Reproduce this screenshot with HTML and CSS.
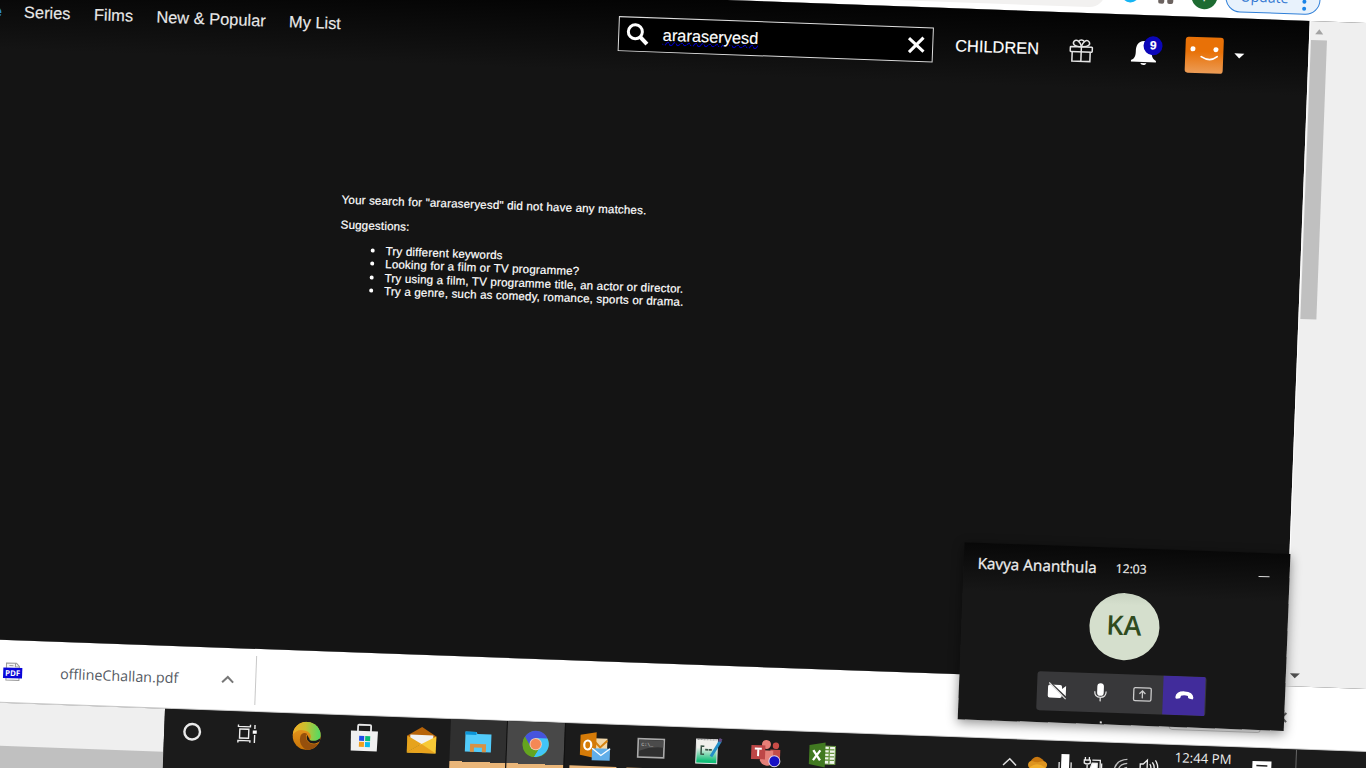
FILE: index.html
```html
<!DOCTYPE html>
<html lang="en">
<head>
<meta charset="utf-8">
<title>Search</title>
<link rel="stylesheet" href="styles.css">
</head>
<body>
<div class="screen">
<div class="stage">
  <div class="toolbar">
    <div class="address"></div>
    <span class="ext-cyan"></span>
    <svg class="ext-grey" width="16" height="14" viewBox="0 0 16 14"><rect x="0" y="2" width="6" height="10" rx="2" fill="#6b625f"/><rect x="9" y="2" width="6" height="10" rx="2" fill="#6b625f"/></svg>
    <span class="profile">Y</span>
    <div class="update"><span>Update</span><svg width="6" height="24" viewBox="0 0 6 24"><g fill="#1a84e8"><circle cx="3" cy="4" r="2"/><circle cx="3" cy="11" r="2"/><circle cx="3" cy="18" r="2"/></g></svg></div>
  </div>
  <div class="main">
    <div class="site">
      <header class="header">
        <span class="nav home">Home</span>
        <span class="nav series">Series</span>
        <span class="nav films">Films</span>
        <span class="nav popular">New &amp; Popular</span>
        <span class="nav mylist">My List</span>
        <div class="search">
          <svg width="23" height="23" viewBox="0 0 23 23" fill="none" stroke="#fff"><circle cx="9" cy="9" r="7" stroke-width="3"/><path d="M14 14L21 21" stroke-width="4"/></svg>
          <span class="query">araraseryesd</span>
          <svg width="18" height="18" viewBox="0 0 18 18" stroke="#fff" stroke-width="3"><path d="M1.500 2.500L16.500 15.500M16 1.500L2 16.500"/></svg>
        </div>
        <span class="nav children">CHILDREN</span>
        <svg class="gift" width="24" height="24" viewBox="0 0 24 24" fill="none" stroke="#e4e4e4" stroke-width="1.5"><rect x="1" y="8" width="22" height="5" rx=".6"/><path d="M3 13v9.500h18V13M12 8v14.500M12 8C4 8 3 5 4.500 2.800C7 -.2 11 3 12 8C13 3 17 -.2 19.500 2.800C21 5 20 8 12 8"/><path d="M9 3C10 .5 14 .5 15 3"/></svg>
        <div class="bell">
          <svg width="25" height="26" viewBox="0 0 25 26" fill="#fff"><path d="M12.500 1C6 1.500 4.500 6 4.500 12C4.500 17 3 19 0 20.500V22H25V20.500C22 19 20.500 17 20.500 12C20.500 6 19 1.500 12.500 1ZM9.500 23H15.500C15 25.500 10 25.500 9.500 23Z"/></svg>
          <span class="count">9</span>
        </div>
        <svg class="face" width="38" height="36" viewBox="0 0 38 36"><defs><linearGradient id="o" x2="0" y2="1"><stop offset=".4" stop-color="#e87107"/><stop offset="1" stop-color="#ec9c56"/></linearGradient></defs><rect width="38" height="36" rx="3" fill="url(#o)"/><circle cx="7.500" cy="12" r="2.500" fill="#fff"/><circle cx="30.500" cy="12" r="2.500" fill="#fff"/><path d="M16 19.500Q25 25 32 19" fill="none" stroke="#fff" stroke-width="1.700" stroke-linecap="round"/></svg>
        <span class="caret"></span>
      </header>
      <section class="results">
        <p class="message">Your search for "araraseryesd" did not have any matches.</p>
        <p class="suggest">Suggestions:</p>
        <ul class="tips">
          <li>Try different keywords</li>
          <li>Looking for a film or TV programme?</li>
          <li>Try using a film, TV programme title, an actor or director.</li>
          <li>Try a genre, such as comedy, romance, sports or drama.</li>
        </ul>
      </section>
    </div>
    <div class="gutter">
      <span class="arrow-up"></span>
      <span class="thumb"></span>
      <span class="arrow-down"></span>
    </div>
  </div>
  <div class="downloads">
    <svg class="pdf" width="19" height="19" viewBox="0 0 19 19"><path d="M3 1H13L16 4V18H3Z" fill="#f5f5f5" stroke="#9a9a9a"/><path d="M12 1V4.500H16M6 3.500H10" fill="none" stroke="#999"/><rect y="5.500" width="19" height="10.500" fill="#0a06d8"/><text x="9.500" y="13.800" text-anchor="middle" textLength="15" lengthAdjust="spacingAndGlyphs">PDF</text></svg>
    <span class="filename">offlineChallan.pdf</span>
    <svg width="13" height="9" viewBox="0 0 13 9" fill="none" stroke="#777" stroke-width="2"><path d="M1 7.500L6.500 2L12 7.500"/></svg>
    <span class="divider"></span>
    <div class="bar-end"><svg width="11" height="11" viewBox="0 0 11 11" stroke="#666" stroke-width="2"><path d="M1 1L10 10M10 1L1 10"/></svg></div>
  </div>
  <div class="bottom">
    <div class="below-page"><span></span></div>
    <div class="taskbar">
      <div class="app"><svg width="20" height="20" viewBox="0 0 20 20"><circle cx="10" cy="10" r="7.800" fill="none" stroke="#e9e9e9" stroke-width="2.400"/></svg></div>
      <div class="app task-view"><svg width="20" height="18" viewBox="0 0 20 18" fill="none" stroke="#eee" stroke-width="1.400"><rect x="2.500" y="4.500" width="9" height="9"/><path d="M1 0V2H13V0M1 18V16H13V18M17.500 0V4M17.500 10V18"/><rect x="15.500" y="5.500" width="4" height="3.200" fill="#fff" stroke="none"/></svg></div>
      <div class="app"><svg width="29" height="28" viewBox="0 0 29 28"><defs><linearGradient id="e1"><stop stop-color="#f5ac24"/><stop offset=".45" stop-color="#c9c02f"/><stop offset="1" stop-color="#48dd68"/></linearGradient><linearGradient id="e2" x2="0" y2="1"><stop stop-color="#efa024"/><stop offset="1" stop-color="#c87407"/></linearGradient><clipPath id="ec"><circle cx="14.500" cy="14" r="14"/></clipPath></defs><g clip-path="url(#ec)"><rect width="29" height="28" fill="url(#e2)"/><path d="M8 16C8 12 12 10 15 12C12 15 15 21 20 22Q24 23 29 19V29H17C11 27 7 22 8 16Z" fill="#96500c"/><path d="M15 13C13 18 18 23 24 21L30 18V16L18 18Z" fill="#1b1b1b"/><path d="M0 10C3-4 29-4 29 11C29 18 23 20 17.500 18C20 14 18 10 13 9C8 7 3 9 0 14Z" fill="url(#e1)"/></g></svg></div>
      <div class="app"><svg width="28" height="28" viewBox="0 0 28 28"><path d="M7.500 8V2Q7.500 1 8.500 1H19.500Q20.500 1 20.500 2V8" fill="none" stroke="#e8e8e8" stroke-width="1.800"/><path d="M.5 7H27.500L27 27H1Z" fill="#f0f0f0"/><path d="M9 12h5v5H9z" fill="#1f4de8"/><path d="M15 12h5v5h-5z" fill="#08ba76"/><path d="M9 18h5v5H9z" fill="#f0a01e"/><path d="M15 18h5v5h-5z" fill="#08b9ef"/></svg></div>
      <div class="app"><svg width="29" height="26" viewBox="0 0 29 26"><path d="M0 9L14.500 0L29 9V14H0Z" fill="#b66308"/><path d="M3 8H26V18H3Z" fill="#f1f1f1"/><path d="M0 9L14.500 17L0 26Z" fill="#e6a31c"/><path d="M29 9L14.500 17L0 26H29Z" fill="#f7c936"/><path d="M14.500 17L29 26H0Z" fill="#e9a31d"/></svg></div>
      <div class="app open explorer"><svg width="26" height="21" viewBox="0 0 26 21"><path d="M0 0H11L12 2H26V20H0Z" fill="#52cbfa"/><path d="M0 0H11V3H0Z" fill="#0a94d8"/><path d="M5 20V12H21V20H17V15.500H9V20Z" fill="#d79145"/></svg></div>
      <div class="app open chrome"><svg width="27" height="26" viewBox="0 0 27 26"><circle cx="13.500" cy="13" r="13" fill="#64a51f"/><path d="M2.500 6C8-3 21-2 25 7L13.500 13Z" fill="#4654dd"/><path d="M13.500 7H25C30 16 23 26 12 26L19 14Z" fill="#41c5f8"/><path d="M13.500 7L2.500 6L9 17Z" fill="#4654dd"/><path d="M2.500 6C-2 13 1 25 12 26L17 17L9 17Z" fill="#64a51f"/><circle cx="13.500" cy="13" r="6.200" fill="#f0c9b4"/><circle cx="13.500" cy="13" r="5.200" fill="#f58855"/></svg></div>
      <div class="app open outlook"><svg width="30" height="29" viewBox="0 0 30 29"><path d="M14 6H27V20H14Z" fill="#f2d8aa"/><path d="M15 10L20 15L27 8" fill="none" stroke="#d58210" stroke-width="2"/><path d="M0 3L16 0V26L0 23Z" fill="#d57b08"/><ellipse cx="7.500" cy="13" rx="3.500" ry="4.500" fill="none" stroke="#fff" stroke-width="2.200"/><rect x="12" y="16" width="18" height="12" fill="#61aee9"/><path d="M12 16L21 23L30 16" fill="none" stroke="#fff" stroke-width="1.300"/></svg></div>
      <div class="app open cmd"><svg width="28" height="20" viewBox="0 0 28 20"><rect x=".8" y=".8" width="26" height="18.400" fill="#303030" stroke="#aaa" stroke-width="1.600"/><path d="M2 2H26V9Q14 8 2 13Z" fill="#4b4b4b"/><text class="prompt" x="4" y="8">C:\_</text></svg></div>
      <div class="app"><svg width="26" height="27" viewBox="0 0 26 27"><defs><linearGradient id="n" x2="0" y2="1"><stop offset=".35" stop-color="#f0f0ec"/><stop offset=".9" stop-color="#12be78"/></linearGradient></defs><path d="M1 2H22V26H1Z" fill="url(#n)" stroke="#e5e5e5"/><path d="M2 2.500H21" stroke="#999" stroke-dasharray="2 1"/><path d="M9 9H6V17H9" fill="none" stroke="#375345" stroke-width="1.500"/><path d="M10 12.500H17" stroke="#375345" stroke-width="1.800" stroke-dasharray="3 .6"/><path d="M25 3L16 19" stroke="#248fc7" stroke-width="3"/><path d="M25.500 1L24 4" stroke="#614a83" stroke-width="3"/></svg></div>
      <div class="app"><svg width="29" height="27" viewBox="0 0 29 27"><circle cx="15" cy="5" r="4.500" fill="#e77f77"/><circle cx="24.500" cy="6" r="3.200" fill="#ca4c47"/><path d="M19 10H29V20Q27 24 21 24Z" fill="#c44d49"/><path d="M9 11H22V22Q20 27 15 26Q10 25 9 21Z" fill="#e58079"/><path d="M0 6H14V20H0Z" fill="#bd4747"/><path d="M3.500 9.500H10.500M7 9.500V17" stroke="#fff" stroke-width="2"/><circle cx="23.500" cy="21.500" r="5.500" fill="#1710c4" stroke="#e1d9e8" stroke-width="1"/></svg></div>
      <div class="app"><svg width="27" height="25" viewBox="0 0 27 25"><rect x="14" y="3.500" width="12" height="18" fill="#f0f5ec" stroke="#649340"/><path d="M15 7H25M15 10.500H25M15 14H25M15 17.500H25M20 4V21" stroke="#64933c" stroke-width="1.300"/><path d="M0 3L16 0V25L0 22Z" fill="#417921"/><path d="M4 8L11 18M11 8L4 18" stroke="#fff" stroke-width="2.300"/></svg></div>
      <div class="tray">
        <svg width="15" height="9" viewBox="0 0 15 9" fill="none" stroke="#ddd" stroke-width="1.500"><path d="M1 8L7.500 1.500L14 8"/></svg>
        <svg width="19" height="14" viewBox="0 0 19 14"><path d="M4 3Q9-2 14 3L18 7H1Z" fill="#c97810"/><path d="M4 5Q0 5 0 9Q0 13 5 13H15Q19 12 19 8Q18 4 14 5Q9 7 4 5Z" fill="#dd9420"/><path d="M2 11Q9 5 17 11V14H2Z" fill="#f0ad2b"/></svg>
        <svg width="14" height="22" viewBox="0 0 14 22"><rect x="3" y="1" width="8" height="14" fill="#fff"/><path d="M1 9V16H13V9M7 16V22" fill="none" stroke="#ccc" stroke-width="1.500"/></svg>
        <svg width="19" height="15" viewBox="0 0 19 15" fill="none" stroke="#eee" stroke-width="1.300"><path d="M2 0V3M6 0V3M1 3H7V6Q4 8 1 6ZM4 8V14H17V3H9M18.500 6V11"/><path d="M9 6H14V12H7Z" fill="#fff"/></svg>
        <svg width="15" height="15" viewBox="0 0 15 15" fill="none" stroke="#bbb" stroke-width="1.300"><path d="M1 13Q2 2 14 1M5 14Q5 6 14 5M9 14Q9 10 14 9"/></svg>
        <svg width="20" height="16" viewBox="0 0 20 16" fill="none" stroke="#eee" stroke-width="1.300"><path d="M1 5H4L8 1V15L4 11H1ZM10.500 5Q13 8 10.500 11M13 3Q17 8 13 13M16 1Q21 8 16 15"/></svg>
        <span class="clock">12:44 PM</span>
        <svg class="note" width="19" height="20" viewBox="0 0 19 20"><path d="M0 0H19V14H13L9 19V14H0Z" fill="#fff"/><path d="M4 4.500H15M4 8.500H15" stroke="#222" stroke-width="1.400"/></svg>
        <span class="show-desktop"></span>
      </div>
    </div>
  </div>
  <div class="show-all"></div>
  <div class="call">
    <div class="call-head"><span class="caller">Kavya Ananthula</span><span class="duration">12:03</span><span class="minimise"></span></div>
    <div class="initials"><span>KA</span></div>
    <div class="controls">
      <div><svg width="20" height="17" viewBox="0 0 20 17"><path d="M2 2H12Q14 2 14 4V6L18 3V14L14 11V13Q14 15 12 15H2Q0 15 0 13V4Q0 2 2 2Z" fill="#fff"/><path d="M1 -1L20 16" stroke="#38383a" stroke-width="1.600"/><path d="M1 0L18 16" stroke="#ddd" stroke-width="1.200"/></svg></div>
      <div><svg width="13" height="18" viewBox="0 0 13 18"><rect x="3.200" y="0" width="6.600" height="12.500" rx="3.300" fill="#fff"/><path d="M.8 8Q.8 14 6.500 14T12.200 8M6.500 14V18" fill="none" stroke="#ddd" stroke-width="1.300"/></svg></div>
      <div><svg width="19" height="15" viewBox="0 0 19 15" fill="none" stroke="#ccc" stroke-width="1.300"><rect x=".8" y="1" width="17.400" height="13" rx="1.500"/><path d="M9.500 11.500V4M6.500 7L9.500 4L12.500 7"/></svg></div>
      <div class="hang"><svg width="19" height="10" viewBox="0 0 19 10"><path d="M.5 7Q1 1 9.500 1T18.500 7Q18.500 9 17 8.700L14 8Q13 7.500 13 5.500Q9.500 4.300 6 5.500Q6 7.500 5 8L2 8.700Q.5 9 .5 7Z" fill="#fff"/></svg></div>
    </div>
    <span class="grip"></span>
  </div>
</div>
</div>
</body>
</html>
```
FILE: styles.css
```css
* { box-sizing: border-box; }
body { margin: 0; background: #1a1a1a; font-family: "Liberation Sans", Arial, sans-serif; }
svg { display: block; flex: none; overflow: visible; }

.screen { width: 1366px; height: 768px; overflow: hidden; }

/* The whole desktop is tilted about two degrees */
.stage {
  position: relative;
  width: 1420px;
  height: 820px;
  transform-origin: 0 0;
  transform: matrix(1, 0.036, -0.038, 1, 0.6, -50.2);
}

.toolbar { display: flex; height: 24px; background: #fff; }
.address { width: 1105px; height: 18px; background: #f2f1f0; border-bottom-right-radius: 16px; flex: none; }
.ext-cyan { width: 18px; height: 18px; margin: -6px 0 0 16px; border-radius: 50%; background: #16b5f4; }
.ext-grey { margin: 0 0 0 19px; }
.profile { width: 26px; height: 26px; margin: -10px 0 0 17px; border-radius: 50%; background: #1d6b31; color: #e5eee6; font: 14px/26px "Liberation Sans", sans-serif; text-align: center; }
.update { display: flex; align-items: center; justify-content: space-between; width: 95px; height: 30px; margin: -12.5px 0 0 8px; padding: 0 12px 0 14px; border: 1.5px solid #2f7fd8; border-radius: 15px; background: #e8f2fc; color: #3478d2; font: 14px "Open Sans", sans-serif; }
.update span { margin-top: -2px; }
.update svg { margin-top: 6px; }

.main { display: flex; height: 665px; background: #efefef; }
.site { width: 1311px; flex: none; background: linear-gradient(#030303, #141414 75px); border-right: 1px solid #fff; }
.header { display: flex; align-items: center; height: 75px; color: #e8e8e8; font-size: 16.4px; -webkit-text-stroke: .15px currentColor; }
.nav { flex: none; white-space: nowrap; }
.home { width: 50px; margin-left: -46.5px; text-align: right; color: #2b8be0; font-weight: bold; }
.series { width: 47px; margin-left: 22.3px; }
.films { width: 40px; margin-left: 22.9px; }
.popular { width: 110px; margin-left: 22.4px; }
.mylist { width: 54px; margin-left: 22.6px; }
.search { display: flex; align-items: center; width: 315px; height: 34.5px; margin-left: 275.3px; padding: 0 6px 0 7px; border: 1px solid #ddd; background: #000; flex: none; }
.query { width: 245px; margin: -1px 0 0 13.5px; color: #fff; text-decoration: underline wavy #0000b8 1px; text-underline-offset: 1px; }
.children { width: 85px; margin-left: 22px; color: #fff; }
.gift { margin-left: 28.8px; }
.bell { position: relative; margin: 0 0 0 38px; }
.count { position: absolute; left: 12.5px; top: -3.5px; width: 19px; height: 19px; border-radius: 50%; background: #0b06b8; color: #fff; font: bold 12px/19px "Liberation Sans", sans-serif; text-align: center; }
.face { margin-left: 29px; }
.caret { margin-left: 11.5px; border: 5.5px solid transparent; border-top: 5.5px solid #fff; border-bottom: 0; }

.results { padding: 131px 0 0 350px; color: #fff; font-size: 11.6px; letter-spacing: .16px; line-height: 13.3px; white-space: nowrap; -webkit-text-stroke: .2px #fff; }
.results p { margin: 0; }
.results .suggest { margin-top: 11.6px; }
.tips { margin: 12px 0 0; padding: 0 0 0 46px; }
.tips li::marker { font-size: 13px; }

.gutter { display: flex; flex-direction: column; height: 665px; margin-left: 1px; width: 16px; align-items: center; }
.arrow-up { margin: 8px 0 0; border: 4.5px solid transparent; border-bottom: 5px solid #a3a3a3; border-top: 0; }
.thumb { width: 16px; height: 279.5px; margin-top: 5.5px; background: #c0c0c0; flex: none; }
.arrow-down { margin: 353.5px 0 0; border: 5px solid transparent; border-top: 5px solid #505050; border-bottom: 0; }

.downloads { display: flex; align-items: center; height: 63px; background: #fff; padding-left: 29.5px; border-bottom: 1px solid #c5c5c5; }
.pdf text { font: bold 8px "Open Sans", sans-serif; fill: #fff; }
.filename { width: 161px; margin-left: 38.5px; color: #555a63; font: 14.3px "Open Sans", sans-serif; }
.divider { width: 1px; height: 49px; margin-left: 20.5px; background: #c8c8c8; }
.bar-end { margin-left: 1020.5px; }

.bottom { display: flex; height: 68px; }
.below-page { width: 192.5px; padding-top: 43px; background: #efefef; flex: none; }
.below-page span { display: block; height: 25px; background: #c0c0c0; }
.taskbar { display: flex; flex: 1; background: #1b1b1b; }
.app { display: flex; align-items: center; justify-content: center; width: 57.3px; height: 42px; padding-top: 2px; flex: none; }
.app:first-child { padding-right: 1px; }
.task-view { padding-right: 4px; }
.open { height: 60px; padding-bottom: 18px; border-right: 1px solid #111; }
.explorer { background: linear-gradient(#303030 42px, #eab679 42px); }
.chrome { background: linear-gradient(#484848 42px, #eab679 42px); }
.outlook { padding-left: 3px; border: 0; background: linear-gradient(#eab679, #eab679) 5px 42px / 47px 18px no-repeat; }
.cmd { border: 0; background: linear-gradient(#eab679, #eab679) 5px 42px / 47px 18px no-repeat; }
.prompt { font: 5px "Liberation Mono", monospace; fill: #ccc; }
.tray { display: flex; align-items: center; height: 42px; padding-top: 3px; margin-left: 151px; }
.tray svg { margin-right: 11px; }
.clock { width: 58px; margin: -21px 0 0 4px; color: #eee; font: 13.2px "Open Sans", sans-serif; white-space: nowrap; }
.tray .note { margin: 0 24px 0 20px; }
.show-desktop { width: 1px; height: 45px; background: #666; }

.show-all { position: absolute; left: 1196px; top: 706px; width: 92px; height: 31px; border: 1px solid #ccc; border-radius: 4px; }
.call { position: absolute; left: 984.5px; top: 557px; width: 326.5px; height: 176.5px; background: linear-gradient(#080808, #171717 48px); box-shadow: 0 3px 12px rgba(0, 0, 0, .45); color: #eee; font-family: "Open Sans", sans-serif; }
.call-head { display: flex; align-items: center; height: 39px; padding-left: 14.5px; white-space: nowrap; }
.caller { width: 121px; font-size: 15.3px; -webkit-text-stroke: .3px #eee; }
.duration { width: 31px; margin: 2px 0 0 17px; font-size: 12.2px; -webkit-text-stroke: .2px #eee; }
.minimise { width: 11px; height: 1.3px; margin: 8px 0 0 112px; background: #ddd; }
.initials { display: flex; align-items: center; justify-content: center; width: 70px; height: 66.5px; margin: 6px 0 0 128px; border-radius: 50%; background: linear-gradient(#c8d3c1, #d5dfcd 12px); color: #2f4b1e; font-size: 27px; font-weight: 600; }
.initials span { margin-top: -3px; }
.controls { display: flex; width: 168.5px; height: 39.5px; margin: 14px 0 0 78.5px; border-radius: 3px; overflow: hidden; background: #38383a; }
.controls div { display: flex; align-items: center; justify-content: center; width: 42.1px; }
.controls .hang { background: #412c9b; }
.grip { display: block; width: 2px; height: 2px; margin: 9px 0 0 142px; background: #ddd; }
```
